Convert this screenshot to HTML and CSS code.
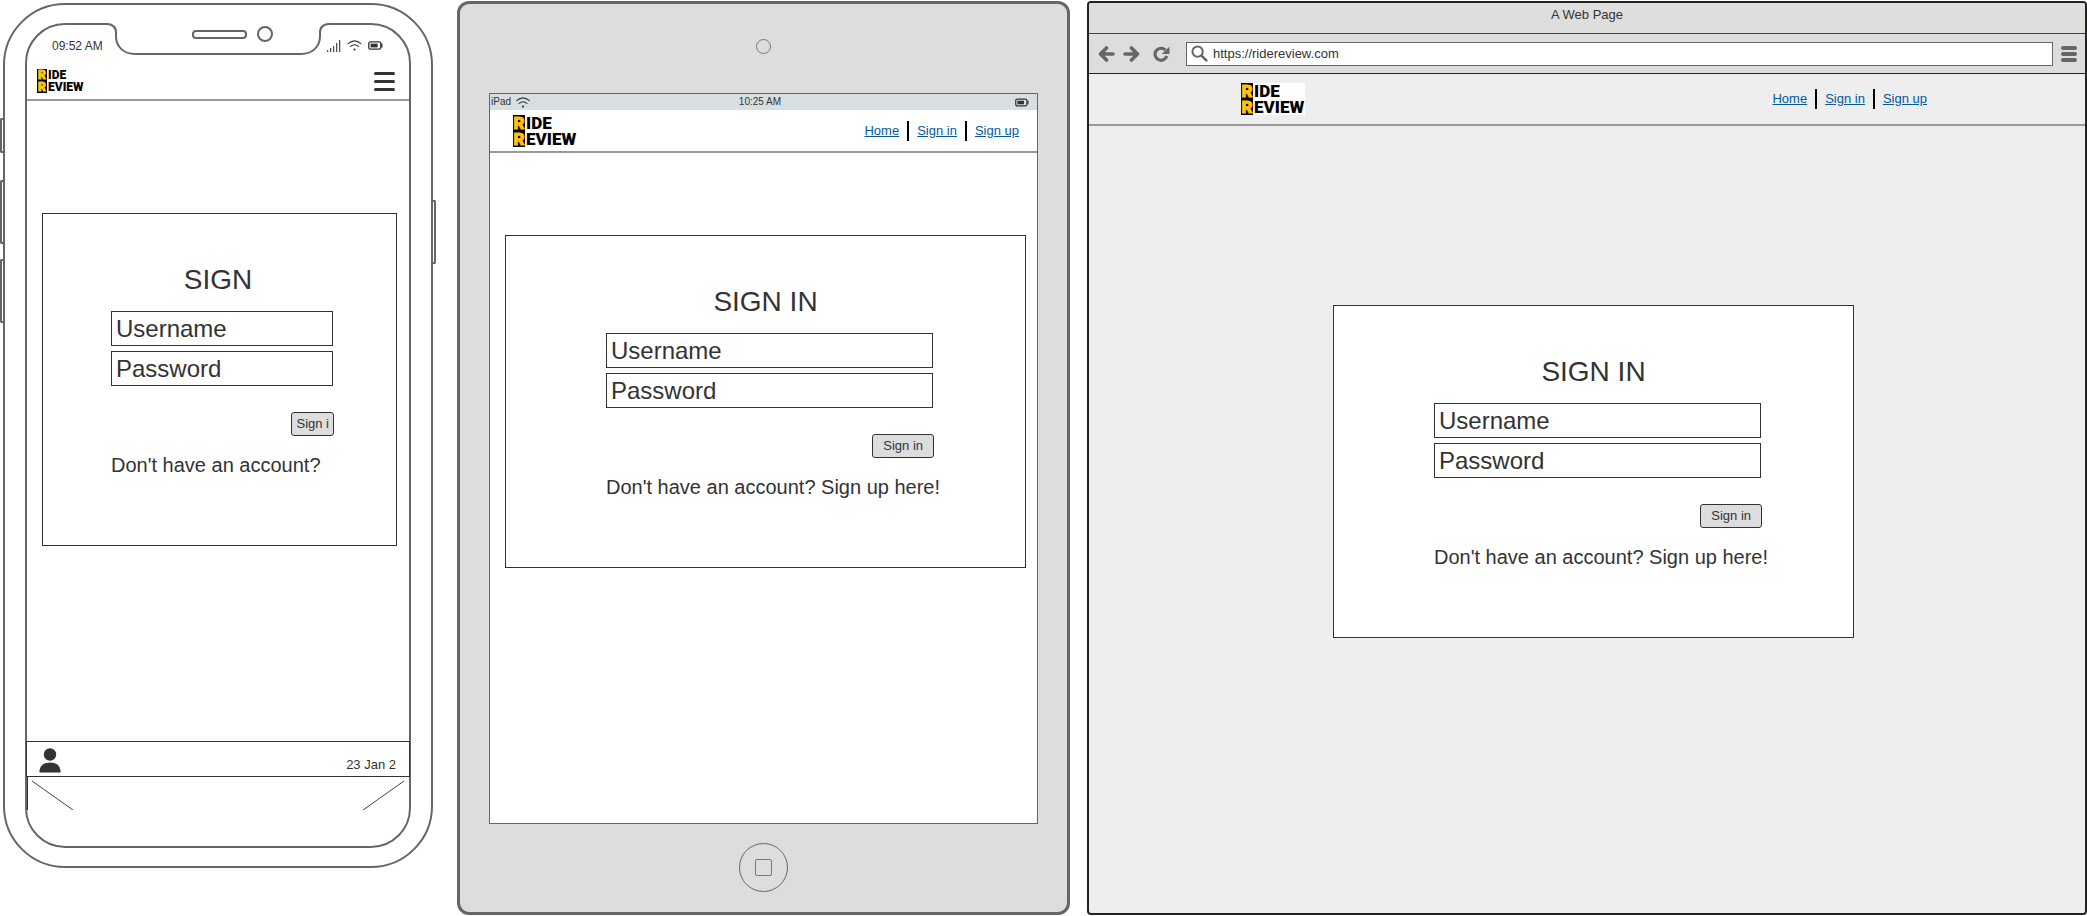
FILE: index.html
```html
<!DOCTYPE html>
<html lang="en">
<head>
<meta charset="utf-8">
<title>Ride Review – Sign in wireframes</title>
<link rel="stylesheet" href="styles.css">
</head>
<body>
<svg class="defs" aria-hidden="true">
  <symbol id="wifi" viewBox="0 0 14 11">
    <path d="M0.6 3.6 Q7 -1.8 13.4 3.6 M3 6.4 Q7 3 11 6.4" fill="none" stroke="#333" stroke-width="1.1" stroke-linecap="round"/>
    <circle cx="7" cy="9.6" r="1.1" fill="#333"/>
  </symbol>
  <symbol id="battery" viewBox="0 0 15 9">
    <rect x="0.8" y="0.8" width="12" height="7.4" rx="1.8" fill="none" stroke="#333" stroke-width="1.3"/>
    <rect x="2.6" y="2.6" width="7" height="3.8" fill="#333"/>
    <path d="M13.8 2.6 V6.4" stroke="#333" stroke-width="1.4"/>
  </symbol>
</svg>

<section class="phone">
  <span class="side side-mute"></span>
  <span class="side side-up"></span>
  <span class="side side-down"></span>
  <span class="side side-power"></span>
  <div class="phone-screen">
    <svg class="notch" viewBox="0 0 222 34" width="222" height="34" aria-hidden="true">
      <path d="M0 0 H222 V2 L205 4 L200 25 L190 32 H30 L18 22 L16 4 L0 2 Z" fill="#fff"/>
      <path d="M0 1 C5 1 9 4 9 9 V13 C9 24 17 31 28 31 H194 C205 31 213 24 213 13 V9 C213 4 217 1 222 1" fill="none" stroke="#666" stroke-width="2"/>
      <rect x="86" y="8" width="53" height="7" rx="3" fill="#fff" stroke="#666" stroke-width="2"/>
      <circle cx="158" cy="11" r="7" fill="#fff" stroke="#666" stroke-width="2"/>
    </svg>
    <div class="phone-status">
      <span>09:52 AM</span>
      <span class="status-icons">
        <svg width="14" height="12" viewBox="0 0 14 12" aria-hidden="true"><path d="M0.7 10V12M3.7 8V12M6.7 6V12M9.7 3V12M12.7 0V12" stroke="#333" stroke-width="1.1"/></svg>
        <svg width="15" height="11"><use href="#wifi"/></svg>
        <svg width="15" height="9"><use href="#battery"/></svg>
      </span>
    </div>
    <header class="phone-header">
      <div class="logo logo-small"><div><b>R</b>IDE</div><div><b>R</b>EVIEW</div></div>
      <button class="menu" aria-label="Menu"><i></i><i></i><i></i></button>
    </header>
    <main class="phone-main">
      <form class="card">
        <h2>SIGN</h2>
        <input type="text" placeholder="Username" aria-label="Username">
        <input type="password" placeholder="Password" aria-label="Password">
        <button class="submit" type="button">Sign i</button>
        <p>Don't have an account?</p>
      </form>
    </main>
    <footer class="phone-footer">
      <svg width="22" height="25" viewBox="0 0 22 25" aria-hidden="true"><circle cx="11" cy="6.5" r="6.2" fill="#333"/><path d="M0.5 24.5 V22.5 Q1.5 14.5 11 14.5 Q20.5 14.5 21.5 22.5 V24.5 Z" fill="#333"/></svg>
      <span>23 Jan 2</span>
    </footer>
    <div class="phone-bottom">
      <svg width="48" height="33" viewBox="0 0 48 33" aria-hidden="true"><path d="M0.5 0V33" stroke="#333"/><path d="M5 4 L46 33" stroke="#444"/></svg>
      <svg width="48" height="33" viewBox="0 0 48 33" aria-hidden="true"><path d="M43 4 L2 33" stroke="#444"/></svg>
    </div>
  </div>
</section>

<section class="tablet">
  <div class="tablet-top"><span class="camera"></span></div>
  <div class="tablet-screen">
    <div class="tablet-status">
      <span class="carrier">iPad <svg width="14" height="11"><use href="#wifi"/></svg></span>
      <span>10:25 AM</span>
      <span class="charge"><svg width="14" height="9"><use href="#battery"/></svg></span>
    </div>
    <header class="tablet-header">
      <div class="logo"><div><b>R</b>IDE</div><div><b>R</b>EVIEW</div></div>
      <nav><a href="#">Home</a><i></i><a href="#">Sign in</a><i></i><a href="#">Sign up</a></nav>
    </header>
    <main class="tablet-main">
      <form class="card card-wide">
        <h2>SIGN IN</h2>
        <input type="text" placeholder="Username" aria-label="Username">
        <input type="password" placeholder="Password" aria-label="Password">
        <button class="submit" type="button">Sign in</button>
        <p>Don't have an account? Sign up here!</p>
      </form>
    </main>
  </div>
  <div class="tablet-bottom"><button class="home" aria-label="Home button"><i></i></button></div>
</section>

<section class="browser">
  <div class="titlebar">A Web Page</div>
  <div class="toolbar">
    <button aria-label="Back"><svg width="17" height="16" viewBox="0 0 17 16"><path d="M15 8H3M8.5 2L2.5 8L8.5 14" fill="none" stroke="#666" stroke-width="3.6" stroke-linecap="round" stroke-linejoin="round"/></svg></button>
    <button aria-label="Forward"><svg width="17" height="16" viewBox="0 0 17 16"><path d="M2 8H14M8.5 2L14.5 8L8.5 14" fill="none" stroke="#666" stroke-width="3.6" stroke-linecap="round" stroke-linejoin="round"/></svg></button>
    <button class="reload" aria-label="Reload"><svg width="17" height="16" viewBox="0 0 17 16"><path d="M12.3 4 A6 6 0 1 0 13.8 10" fill="none" stroke="#666" stroke-width="3.2"/><path d="M16.5 0.5 V8 H8.8 Z" fill="#666"/></svg></button>
    <div class="address">
      <svg width="17" height="17" viewBox="0 0 17 17" aria-hidden="true"><circle cx="6.6" cy="6.6" r="5.2" fill="none" stroke="#666" stroke-width="2"/><path d="M10.8 10.8 L15.3 15.3" stroke="#666" stroke-width="2.6" stroke-linecap="round"/></svg>
      <input type="text" value="https://ridereview.com" aria-label="Address">
    </div>
    <button class="options" aria-label="Browser menu"><i></i><i></i><i></i></button>
  </div>
  <header class="browser-header">
    <div class="logo logo-framed"><div><b>R</b>IDE</div><div><b>R</b>EVIEW</div></div>
    <nav><a href="#">Home</a><i></i><a href="#">Sign in</a><i></i><a href="#">Sign up</a></nav>
  </header>
  <main class="browser-main">
    <form class="card card-wide">
      <h2>SIGN IN</h2>
      <input type="text" placeholder="Username" aria-label="Username">
      <input type="password" placeholder="Password" aria-label="Password">
      <button class="submit" type="button">Sign in</button>
      <p>Don't have an account? Sign up here!</p>
    </form>
  </main>
</section>
</body>
</html>
```
FILE: styles.css
```css
* { box-sizing: border-box; }

body {
  margin: 0;
  min-height: 100vh;
  padding: 1px 0;
  display: grid;
  grid-template-columns: minmax(0, 440fr) minmax(0, 613fr) minmax(0, 1000fr);
  column-gap: 17px;
  background: #fff;
  color: #333;
  font: 13px/16px "Liberation Sans", Arial, sans-serif;
}

svg { display: block; flex: none; }
.defs { position: absolute; width: 0; height: 0; }

button, input { font: inherit; color: inherit; }
button { padding: 0; border: 0; background: none; }

/* Logo */
.logo {
  color: #000;
  font: 900 17px/16px Roboto, sans-serif;
  white-space: nowrap;
}
.logo div { display: flex; }
.logo b {
  width: 12px;
  margin-right: 1px;
  background: #000;
  color: #ffc20e;
  text-align: center;
  -webkit-text-stroke: 1px #ffc20e;
}
.logo-framed { padding-right: 1px; background: #fff; }
.logo-small { font-size: 12px; line-height: 12px; }
.logo-small b { width: 10px; }

/* Site links */
nav { display: flex; align-items: center; gap: 8px; }
nav a { color: #005b9f; line-height: 20px; }
nav i { width: 2px; height: 20px; background: #000; }

/* Sign-in card */
.card {
  display: flex;
  flex-direction: column;
  padding: 50px 63px 68px 68px;
  border: 1px solid #333;
  background: #fff;
}
.card-wide { padding-left: 100px; padding-right: 92px; }
.card h2 {
  margin: 0 0 15px;
  padding-right: 8px;
  font-size: 28px;
  font-weight: 400;
  line-height: 32px;
  text-align: center;
}
.card input {
  width: 100%;
  height: 35px;
  margin-bottom: 5px;
  padding: 0 4px;
  border: 1px solid #333;
  border-radius: 0;
  background: #fff;
  font-size: 24px;
}
.card input::placeholder { color: #333; opacity: 1; }
.submit {
  align-self: flex-end;
  height: 24px;
  margin: 21px -1px 17px 0;
  padding: 0 4px;
  border: 1px solid #333;
  border-radius: 3px;
  background: #ddd;
}
.card-wide .submit { padding: 0 10px; }
.card p {
  margin: 0;
  font-size: 20px;
  line-height: 24px;
  white-space: nowrap;
}

/* Phone */
.phone {
  position: relative;
  align-self: start;
  margin: 2px 7px 0 3px;
  padding: 18px 20px 18px 20px;
  border: 2px solid #666;
  border-radius: 62px;
}
.side {
  position: absolute;
  left: -5px;
  width: 5px;
  border: 2px solid #666;
  border-right: 0;
  border-radius: 2px 0 0 2px;
}
.side-mute { top: 113px; height: 35px; }
.side-up { top: 175px; height: 64px; }
.side-down { top: 254px; height: 64px; }
.side-power {
  top: 195px;
  left: auto;
  right: -5px;
  height: 64px;
  border: 2px solid #666;
  border-left: 0;
  border-radius: 0 2px 2px 0;
}
.phone-screen {
  position: relative;
  border: 2px solid #666;
  border-radius: 40px;
}
.notch { position: absolute; top: -2px; left: 50%; margin-left: -111px; }
.phone-status {
  display: flex;
  justify-content: space-between;
  align-items: center;
  height: 38px;
  padding: 3px 26px 0 25px;
  font-size: 12px;
}
.status-icons { display: flex; align-items: center; gap: 6px; }
.phone-header {
  display: flex;
  justify-content: space-between;
  align-items: center;
  height: 38px;
  padding: 0 14px 0 10px;
  border-bottom: 2px solid #999;
}
.menu { display: grid; gap: 5px; width: 21px; }
.menu i { height: 3px; border-radius: 2px; background: #333; }
.phone-main { padding: 112px 12px 195px 15px; }
.phone-footer {
  display: flex;
  justify-content: space-between;
  align-items: flex-end;
  height: 36px;
  margin: 0 -1px;
  padding: 0 13px 3px 12px;
  border: 1px solid #333;
}
.phone-bottom {
  display: flex;
  justify-content: space-between;
  height: 69px;
}

/* Tablet */
.tablet {
  display: flex;
  flex-direction: column;
  padding: 0 29px;
  border: 3px solid #666;
  border-radius: 12px;
  background: #ddd;
}
.tablet-top, .tablet-bottom {
  display: flex;
  justify-content: center;
  align-items: center;
}
.tablet-top { height: 89px; padding-bottom: 5px; }
.tablet-bottom { height: 88px; padding-bottom: 2px; }
.camera { width: 15px; height: 15px; border: 1px solid #777; border-radius: 50%; }
.home {
  display: grid;
  place-items: center;
  width: 49px;
  height: 49px;
  border: 1px solid #666;
  border-radius: 50%;
}
.home i { width: 17px; height: 17px; border: 1px solid #777; border-radius: 2px; }
.tablet-screen { flex: 1; border: 1px solid #666; background: #fff; }
.tablet-status {
  display: grid;
  grid-template-columns: 1fr auto 1fr;
  align-items: center;
  height: 16px;
  padding: 0 8px 0 1px;
  background: #d7dfe2;
  font-size: 10px;
}
.carrier { display: flex; align-items: center; gap: 5px; }
.charge { justify-self: end; }
.tablet-header {
  display: flex;
  justify-content: space-between;
  align-items: center;
  height: 43px;
  padding: 0 18px 0 23px;
  border-bottom: 2px solid #999;
}
.tablet-main { padding: 82px 11px 40px 15px; }

/* Browser */
.browser {
  display: flex;
  flex-direction: column;
  border: 2px solid #222;
  border-radius: 4px;
  background: #eee;
  overflow: hidden;
}
.titlebar {
  height: 31px;
  padding-top: 4px;
  border-bottom: 1px solid #444;
  background: #dededd;
  text-align: center;
}
.toolbar {
  display: flex;
  align-items: center;
  gap: 8px;
  height: 40px;
  padding: 0 8px 0 9px;
  border-bottom: 1px solid #222;
  background: #ddd;
}
.reload { margin: 0 8px 0 5px; }
.address {
  flex: 1;
  display: flex;
  align-items: center;
  gap: 5px;
  height: 24px;
  padding: 0 4px;
  border: 1px solid #666;
  background: #fff;
}
.address input { flex: 1; min-width: 0; padding: 0; border: 0; background: none; }
.options { display: grid; gap: 2px; width: 16px; }
.options i { height: 4px; border-radius: 2px; background: #666; }
.browser-header {
  display: flex;
  justify-content: space-between;
  align-items: center;
  height: 52px;
  padding: 0 158px 0 152px;
  border-bottom: 2px solid #999;
}
.browser-main { padding: 179px 231px 40px 244px; }
```
